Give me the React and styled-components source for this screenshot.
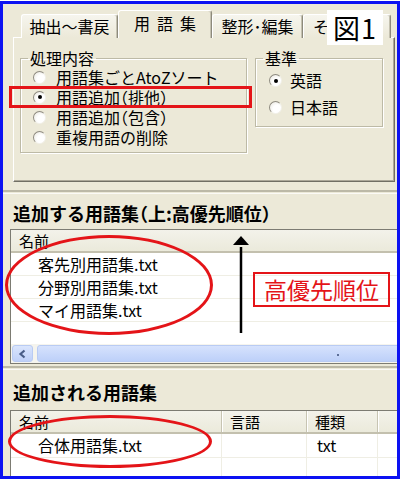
import styled, { createGlobalStyle } from 'styled-components'

const GlobalStyle = createGlobalStyle`
  html, body { margin: 0; padding: 0; background: #fff; }
  body {
    font-family: "Noto Sans CJK JP", "Noto Sans", sans-serif;
    color: #000;
  }
`

const RED = '#e41418'

const Frame = styled.div`
  position: relative;
  box-sizing: border-box;
  width: 400px;
  height: 478px;
  margin-top: 1px;
  border: 3px solid #0c12f2;
  background: #ece9d8;
  overflow: hidden;
  display: flex;
  flex-direction: column;
  & > * { flex-shrink: 0; }
`

const TabStrip = styled.div`
  position: relative;
  z-index: 1;
  display: flex;
  align-items: flex-end;
  height: 28px;
  margin-top: 6px;
  padding-left: 18px;
`

const Tab = styled.div`
  box-sizing: border-box;
  width: ${p => p.$w}px;
  height: ${p => (p.$active ? 28 : 24)}px;
  padding: 0 0 ${p => (p.$active ? 4 : 1)}px ${p => p.$pad || 0}px;
  display: flex;
  align-items: center;
  justify-content: ${p => (p.$pad ? 'flex-start' : 'center')};
  font-size: 16px;
  line-height: 20px;
  letter-spacing: ${p => (p.$active ? 7 : 0)}px;
  text-indent: ${p => (p.$active ? 7 : 0)}px;
  white-space: nowrap;
  overflow: hidden;
  background: ${p => (p.$active ? '#ece9d8' : 'linear-gradient(#f6f5ee, #ece9d8)')};
  border: 1px solid;
  border-color: #fff #8d8a7c transparent #fff;
  border-bottom: none;
  border-radius: 3px 3px 0 0;
  box-shadow: inset -1px 0 0 #c4c1b0;
`

const Panel = styled.div`
  box-sizing: border-box;
  width: 382px;
  height: 145px;
  margin: -1px 0 0 10px;
  padding: 12px 0 0 6px;
  border: 1px solid;
  border-color: #fff #716f64 #716f64 #fff;
  box-shadow: inset -1px -1px 0 #aca899;
  display: flex;
  align-items: flex-start;
  gap: 8px;
`

const Group = styled.fieldset`
  box-sizing: border-box;
  width: ${p => p.$w}px;
  min-width: 0;
  margin: 0;
  padding: 0 0 5px 0;
  border: 1px solid #bdbaa6;
  box-shadow: 1px 1px 0 #fff, inset 1px 1px 0 #fff;
`

const Legend = styled.legend`
  margin-left: 7px;
  padding: 0 2px;
  font-size: 16px;
  line-height: 17px;
`

const RadioRow = styled.div`
  display: flex;
  align-items: center;
  height: ${p => p.$h}px;
  line-height: ${p => p.$h}px;
  padding-left: ${p => p.$pad}px;
  gap: ${p => p.$gap}px;
  font-size: 16px;
  font-feature-settings: "halt";
  white-space: nowrap;
`

const RadioCircle = styled.span`
  box-sizing: border-box;
  flex: none;
  width: 13px;
  height: 13px;
  border-radius: 50%;
  border: 1px solid;
  border-color: #8e8b80 #f2f1ea #f2f1ea #8e8b80;
  background: radial-gradient(circle at 65% 65%, #fff 40%, #e6e4da 100%);
  display: flex;
  align-items: center;
  justify-content: center;
  &::after {
    content: '';
    width: 4px;
    height: 4px;
    border-radius: 50%;
    background: ${p => (p.$checked ? '#000' : 'transparent')};
  }
`

const Splitter = styled.div`
  height: 1px;
  margin-top: ${p => p.$top}px;
  border-top: 2px solid #bcb9a7;
  border-bottom: 1px solid #fbfaf6;
`

const SectionTitle = styled.div`
  margin: ${p => p.$top}px 0 0 10px;
  font-size: 18px;
  font-weight: 700;
  line-height: 18px;
  font-feature-settings: "halt";
  white-space: nowrap;
`

const List = styled.div`
  box-sizing: border-box;
  width: 400px;
  height: ${p => (p.$h ? `${p.$h}px` : 'auto')};
  margin: ${p => p.$top}px 0 0 7px;
  border: 1px solid #7c7b72;
  border-right: none;
  background: #fff;
  display: flex;
  flex-direction: column;
`

const Header = styled.div`
  box-sizing: border-box;
  flex: none;
  display: flex;
  height: ${p => p.$h}px;
  background: linear-gradient(#f3f2ea, #ebeadb);
  border-bottom: 2px solid #c3c0ae;
`

const HeaderCell = styled.div`
  box-sizing: border-box;
  width: ${p => (p.$w ? `${p.$w}px` : 'auto')};
  flex: ${p => (p.$w ? 'none' : 1)};
  padding-left: 8px;
  font-size: 15px;
  line-height: ${p => p.$h - 2}px;
  border-right: 1px solid #c7c4b2;
  box-shadow: 1px 0 0 #fff;
`

const Body = styled.div`
  flex: 1;
  overflow: hidden;
`

const Row = styled.div`
  box-sizing: border-box;
  flex: none;
  display: flex;
  height: ${p => p.$h}px;
  border-bottom: 1px solid #efeee4;
`

const Cell = styled.div`
  box-sizing: border-box;
  width: ${p => (p.$w ? `${p.$w}px` : 'auto')};
  flex: ${p => (p.$w ? 'none' : 1)};
  padding-left: ${p => p.$pad}px;
  font-size: 16px;
  line-height: ${p => p.$h - 1}px;
  white-space: nowrap;
  border-right: ${p => (p.$grid ? '1px solid #efeee4' : 'none')};
`

const Scrollbar = styled.div`
  flex: none;
  display: flex;
  height: 19px;
  padding: 1px 0 1px 1px;
  box-sizing: border-box;
  background: #f5f4ee;
  gap: 4px;
`

const ScrollButton = styled.div`
  box-sizing: border-box;
  width: 21px;
  border: 1px solid #b9cbf3;
  border-radius: 3px;
  background: linear-gradient(#dae5fd, #bfd0f8);
  display: flex;
  align-items: center;
  justify-content: center;
`

const Thumb = styled.div`
  flex: 1;
  border: 1px solid #b9cbf3;
  border-radius: 3px;
  background: linear-gradient(#d6e2fd, #bdd0f9);
  display: flex;
  align-items: center;
`

const Grip = styled.span`
  width: 2px;
  height: 2px;
  margin: 3px 0 0 299px;
  background: #5d6f99;
`

const Ellipse = styled.div`
  position: absolute;
  left: ${p => p.$x}px;
  top: ${p => p.$y}px;
  width: ${p => p.$w}px;
  height: ${p => p.$h}px;
  box-sizing: border-box;
  border: 3px solid ${RED};
  border-radius: 50%;
  pointer-events: none;
`

const Highlight = styled.div`
  position: absolute;
  left: 6px;
  top: 82px;
  width: 243px;
  height: 22px;
  box-sizing: border-box;
  border: 3px solid ${RED};
`

const FigLabel = styled.div`
  position: absolute;
  z-index: 2;
  left: 324px;
  top: 6px;
  width: 56px;
  height: 35px;
  background: #fff;
  display: flex;
  align-items: center;
  justify-content: center;
  font-size: 27px;
  line-height: 1;
  letter-spacing: 1px;
`

const PriorityBox = styled.div`
  position: absolute;
  left: 250px;
  top: 268px;
  width: 137px;
  height: 35px;
  box-sizing: border-box;
  border: 2px solid ${RED};
  display: flex;
  align-items: center;
  justify-content: center;
  color: ${RED};
  font-size: 23px;
  line-height: 1;
`

const ArrowSvg = styled.svg`
  position: absolute;
  left: 229px;
  top: 229px;
`

const Radio = ({ checked, label, h, pad, gap }) => (
  <RadioRow $h={h} $pad={pad} $gap={gap}>
    <RadioCircle $checked={checked} />
    <span>{label}</span>
  </RadioRow>
)

const modes = [
  ['用語集ごとAtoZソート', false],
  ['用語追加（排他）', true],
  ['用語追加（包含）', false],
  ['重複用語の削除', false],
]

const sources = ['客先別用語集.txt', '分野別用語集.txt', 'マイ用語集.txt']

export default function App() {
  return (
    <>
      <GlobalStyle />
      <Frame>
        <TabStrip>
          <Tab $w={97}>抽出～書戻</Tab>
          <Tab $w={94} $active>用語集</Tab>
          <Tab $w={91}>整形･編集</Tab>
          <Tab $w={88} $pad={9}>その他</Tab>
        </TabStrip>

        <Panel>
          <Group $w={227}>
            <Legend>処理内容</Legend>
            {modes.map(([label, checked]) => (
              <Radio key={label} label={label} checked={checked} h={20} pad={12} gap={10} />
            ))}
          </Group>
          <Group $w={128}>
            <Legend>基準</Legend>
            <Radio label="英語" checked h={27} pad={13} gap={8} />
            <Radio label="日本語" h={27} pad={13} gap={8} />
          </Group>
        </Panel>

        <Splitter $top={8} />
        <SectionTitle $top={10}>追加する用語集（上:高優先順位）</SectionTitle>

        <List $top={7} $h={135}>
          <Header $h={23}>
            <HeaderCell $h={23}>名前</HeaderCell>
          </Header>
          <Body>
            {sources.map(name => (
              <Row key={name} $h={23}>
                <Cell $pad={27} $h={23}>{name}</Cell>
              </Row>
            ))}
          </Body>
          <Scrollbar>
            <ScrollButton>
              <svg width="9" height="10" viewBox="0 0 9 10">
                <path d="M6.5 1.5 L2.5 5 L6.5 8.5" fill="none" stroke="#4a5d87" strokeWidth="2.2" />
              </svg>
            </ScrollButton>
            <Thumb>
              <Grip />
            </Thumb>
          </Scrollbar>
        </List>

        <Splitter $top={2} />
        <SectionTitle $top={13}>追加される用語集</SectionTitle>

        <List $top={9}>
          <Header $h={23}>
            <HeaderCell $h={23} $w={211}>名前</HeaderCell>
            <HeaderCell $h={23} $w={85}>言語</HeaderCell>
            <HeaderCell $h={23} $w={71}>種類</HeaderCell>
            <HeaderCell $h={23} />
          </Header>
          {[['合体用語集.txt', '', 'txt'], ['', '', '']].map(([n, l, t], i) => (
            <Row key={i} $h={24}>
              <Cell $w={211} $pad={27} $h={24} $grid>{n}</Cell>
              <Cell $w={85} $pad={10} $h={24} $grid>{l}</Cell>
              <Cell $w={71} $pad={10} $h={24} $grid>{t}</Cell>
              <Cell $h={24} />
            </Row>
          ))}
        </List>

        <FigLabel>図1</FigLabel>
        <Highlight />
        <Ellipse $x={2} $y={231} $w={208} $h={100} />
        <Ellipse $x={5} $y={411} $w={204} $h={53} />
        <ArrowSvg width="18" height="101" viewBox="0 0 18 101">
          <polygon points="1,12 17,12 9,3" fill="#000" />
          <line x1="9" y1="14" x2="9" y2="100" stroke="#000" strokeWidth="2.5" />
        </ArrowSvg>
        <PriorityBox>高優先順位</PriorityBox>
      </Frame>
    </>
  )
}
